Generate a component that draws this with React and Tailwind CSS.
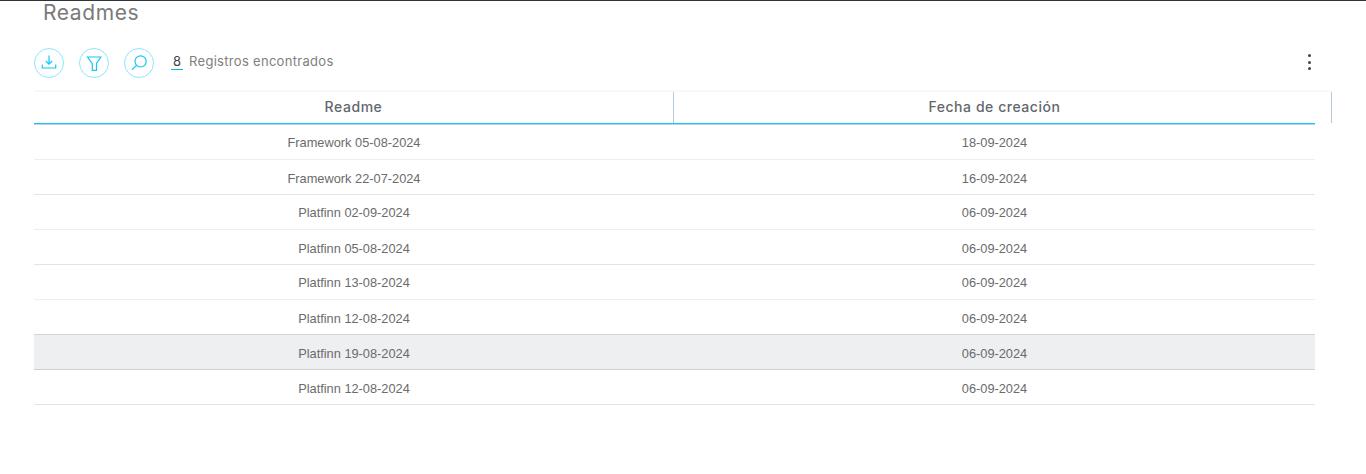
const rows = [
  ["Framework 05-08-2024", "18-09-2024", "border-[#eeeeee]", "", "pt-[2px]"],
  ["Framework 22-07-2024", "16-09-2024", "border-[#e4e4e4]", "", "pt-[4px]"],
  ["Platfinn 02-09-2024", "06-09-2024", "border-[#eeeeee]", "", "pt-[2px]"],
  ["Platfinn 05-08-2024", "06-09-2024", "border-[#e4e4e4]", "", "pt-[4px]"],
  ["Platfinn 13-08-2024", "06-09-2024", "border-[#eeeeee]", "", "pt-[2px]"],
  ["Platfinn 12-08-2024", "06-09-2024", "border-[#d4d4d4]", "", "pt-[4px]"],
  ["Platfinn 19-08-2024", "06-09-2024", "border-[#d0d0d0]", "bg-[#eeeff1]", "pt-[4px]"],
  ["Platfinn 12-08-2024", "06-09-2024", "border-[#e4e4e4]", "", "pt-[4px]"],
];

const Circle = ({ children }) => (
  <button className="flex h-[30px] w-[30px] items-center justify-center rounded-full border border-[#8be6ff] bg-white text-[#12c8f5]">
    {children}
  </button>
);

export default function App() {
  return (
    <div className="h-[474px] w-[1366px] overflow-hidden bg-white font-['Inter',sans-serif]">
      <div className="h-px bg-[#2a343a]" />
      <h1 className="ml-[43px] h-[24px] text-[21px] leading-[24px] font-normal tracking-[0.6px] text-[#7a7a7a]">Readmes</h1>
      <div className="mt-[23px] flex h-[30px] items-center pl-[34px] pr-[55px]">
        <div className="flex gap-[15px]">
          <Circle>
            <svg width="16" height="16" viewBox="0 0 16 16" fill="none" stroke="currentColor" strokeWidth="1.2">
              <path d="M8 0.5v8.5M4.8 6l3.2 3.2L11.2 6M1.3 9.5v3.5h13.4v-3.5" />
            </svg>
          </Circle>
          <Circle>
            <svg width="16" height="16" viewBox="0 0 16 16" fill="none" stroke="currentColor" strokeWidth="1.2">
              <path d="M1.5 2h13.4L10.5 8.5V15.3H6.3V8.5z" />
            </svg>
          </Circle>
          <Circle>
            <svg width="16" height="16" viewBox="0 0 16 16" fill="none" stroke="currentColor" strokeWidth="1.2">
              <circle cx="9.6" cy="6.4" r="5.6" />
              <path d="M5.6 10.4 1 14.5" />
            </svg>
          </Circle>
        </div>
        <span className="mb-[3px] ml-[17px] border-b border-[#12b5dd] px-[2px] text-[13px] leading-[15px] text-[#444]">8</span>
        <span className="mb-[3px] ml-[6px] text-[13px] leading-[15px] tracking-[0.3px] text-[#808080]">Registros encontrados</span>
        <div className="mb-[2px] ml-auto flex flex-col gap-[3.5px]">
          <span className="h-[3px] w-[3px] rounded-full bg-[#444]" />
          <span className="h-[3px] w-[3px] rounded-full bg-[#444]" />
          <span className="h-[3px] w-[3px] rounded-full bg-[#444]" />
        </div>
      </div>
      <div className="ml-[34px] mt-[12px] w-[1298px] border-t-2 border-[#f8f8f8]">
        <div className="flex h-[31px] pb-[2px] text-[14px] font-medium tracking-[0.55px] text-[#62676d]">
          <div className="-mb-[2px] flex w-[640px] items-center justify-center border-r border-[#b9c8d6] pb-[2px]">Readme</div>
          <div className="flex w-[641px] items-center justify-center">Fecha de creación</div>
          <div className="-mb-[2px] w-[17px] border-r border-[#b9c8d6]" />
        </div>
      </div>
      <div className="ml-[34px] w-[1281px]">
        <div className="h-[2px] border-t border-[#12c8f5] bg-[#b9d3e3]" />
        {rows.map((r, i) => (
          <div key={i} className={`flex h-[35px] border-b ${r[4]} ${r[2]} ${r[3]} font-['Liberation_Sans',sans-serif] text-[12.8px] text-[#6b6b6b]`}>
            <div className="flex w-[640px] items-center justify-center">{r[0]}</div>
            <div className="flex w-[641px] items-center justify-center">{r[1]}</div>
          </div>
        ))}
      </div>
    </div>
  );
}
